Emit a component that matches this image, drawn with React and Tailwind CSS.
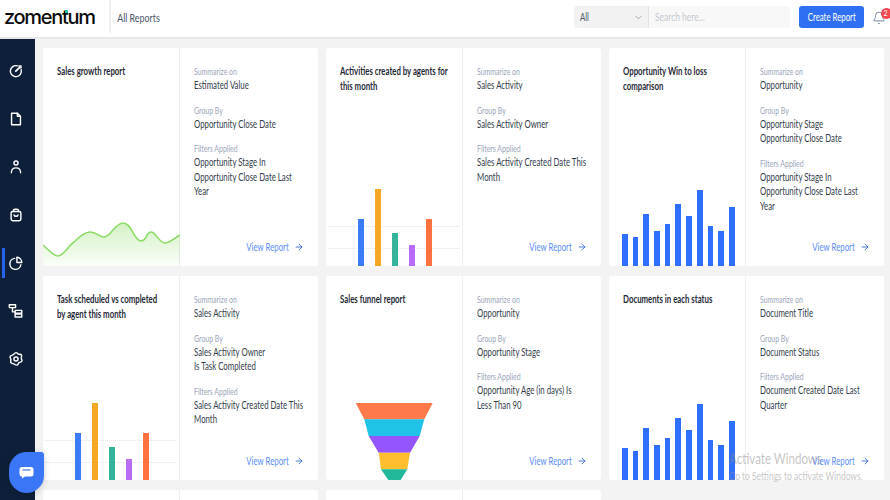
import React from 'react';
import { ChevronDown, Bell, ArrowRight } from 'lucide-react';

// the reference's text is squeezed horizontally, no installed face is that narrow
const squeeze = 'origin-left scale-x-[0.71] whitespace-nowrap';
const squeezeWide = 'origin-left scale-x-[0.77] whitespace-nowrap';

const Icon = ({ children, active }) => (
  <div className="relative h-[48px] flex items-center justify-center pr-[3px]">
    {active && <div className="absolute left-[2px] top-[9px] w-[3px] h-[30px] bg-[#2563eb]" />}
    <svg width="16" height="16" viewBox="0 0 18 18" fill="none" stroke="white" strokeWidth="1.6" strokeLinecap="round" strokeLinejoin="round">
      {children}
    </svg>
  </div>
);

const Sidebar = () => (
  <aside className="w-[35px] shrink-0 bg-[#0e2039] pt-[8px]">
    <Icon>
      <path d="M10.5 3.2A6.2 6.2 0 1 0 14.8 7.5" />
      <path d="M8.8 9.2 13.2 4.8" strokeWidth="2" />
      <path d="M12.3 3.4 14.6 3.4 14.6 5.7" />
    </Icon>
    <Icon>
      <path d="M4 2.5H10.5L14 6V15.5H4Z" />
      <path d="M10.5 2.5V6H14" />
    </Icon>
    <Icon>
      <circle cx="9" cy="4.5" r="2.3" />
      <path d="M3.8 15.5C3.8 12 6 10 9 10C12 10 14.2 12 14.2 15.5" />
    </Icon>
    <Icon>
      <rect x="3.5" y="5" width="11" height="10.5" rx="2" />
      <path d="M6 5V4.5A2 2 0 0 1 8 2.5H10A2 2 0 0 1 12 4.5V5" />
      <path d="M6.8 9C7.2 11 10.8 11 11.2 9" />
    </Icon>
    <Icon active>
      <path d="M7.5 3.8A6.2 6.2 0 1 0 14.4 11" />
      <path d="M10 2.5A6 6 0 0 1 15.5 8.5H10Z" />
    </Icon>
    <Icon>
      <rect x="1.5" y="2" width="7" height="3.2" />
      <rect x="8" y="8.3" width="7.5" height="3.2" />
      <rect x="8" y="12.5" width="7.5" height="3.2" />
      <path d="M5 5.2V10H8" />
    </Icon>
    <Icon>
      <path d="M9 1.8C10.3 1.8 11 3.3 12 3.6C13.2 3.9 14.6 3.3 15.2 4.6C15.8 5.9 14.7 6.9 14.9 8.2C15 9.3 16.2 10.3 15.6 11.5C15 12.7 13.5 12.3 12.5 13.1C11.5 13.9 11.2 15.6 9.9 15.9C8.6 16.2 7.8 15 6.6 14.5C5.5 14 3.9 14.3 3.2 13.1C2.5 11.9 3.4 10.8 3.2 9.5C3 8.2 1.8 7.2 2.5 6C3.2 4.8 4.8 5 5.8 4.2C6.8 3.4 7.7 1.8 9 1.8Z" />
      <circle cx="9" cy="9" r="2.3" />
    </Icon>
  </aside>
);

const Header = () => (
  <header className="h-[39px] shrink-0 flex items-start bg-white border-b-2 border-[#e8e8e8]">
    <div className="relative w-[111px] h-[33px] border-r-2 border-[#f0f0f0] pl-[4px] pt-[3px]">
      <span className="text-[20px] leading-[28px] font-medium tracking-[-1.3px] text-[#0b0b0b]" style={{ fontFamily: 'Inter, sans-serif' }}>zomentum</span>
      <span className="absolute left-[65px] top-[10px] w-[3px] h-[3px] bg-[#1fc7a8]" />
    </div>
    <div className={`pl-[8px] pt-[11px] text-[11.5px] leading-[14px] text-[#4a5568] ${squeezeWide}`}>All Reports</div>
    <div className="ml-auto flex items-start pt-[6px]">
      <div className="w-[75px] h-[22px] flex items-center justify-between bg-[#f2f2f2] border-r border-[#e2e2e2] rounded-l-[3px] pl-[6px] pr-[4px] text-[11px] text-[#4a5568]">
        <span className={squeeze}>All</span>
        <ChevronDown size={11} className="text-[#9aa3af]" />
      </div>
      <div className="w-[141px] h-[22px] flex items-center bg-[#f8f8f8] rounded-r-[3px] pl-[6px] text-[11px] text-[#c4c8ce]">
        <span className={squeezeWide}>Search here...</span>
      </div>
      <div className="ml-[9px] w-[65px] h-[22px] flex items-center justify-center bg-[#2f6ff3] rounded-[3px] text-[11px] text-white">
        <span className="scale-x-[0.71] whitespace-nowrap">Create Report</span>
      </div>
      <div className="relative w-[26px] h-[22px]">
        <Bell size={14} strokeWidth={1.4} className="absolute left-[8px] top-[5px] text-[#5b6f8c]" />
        <span className="absolute left-[17px] top-[2px] w-[11px] h-[11px] rounded-full bg-[#f1484f] text-white text-[7px] leading-[11px] pl-[2.5px]">2</span>
      </div>
    </div>
  </header>
);

const agentBars = [
  { h: 47, c: '#3b7bf6' },
  { h: 77, c: '#f7a823' },
  { h: 33, c: '#36b39b' },
  { h: 21, c: '#b96cf5' },
  { h: 47, c: '#ff7240' },
];

const blueBars = [32, 29, 52, 35, 42, 62, 50, 76, 40, 35, 59];

const AgentChart = () => (
  <div className="relative h-[77px] flex items-end gap-[11px] pl-[32px]">
    <div className="absolute left-[2px] right-[3px] top-[37px] border-t border-dotted border-[#e4e4e4]" />
    <div className="absolute left-[2px] right-[3px] top-[59px] border-t border-dotted border-[#e4e4e4]" />
    {agentBars.map((b, i) => (
      <div key={i} className="relative w-[6px]" style={{ height: b.h, backgroundColor: b.c }} />
    ))}
  </div>
);

const BlueChart = () => (
  <div className="h-[77px] flex items-end pl-[13px] gap-[5px]">
    {blueBars.map((h, i) => (
      <div key={i} className="w-[5.7px] bg-[#2f6fff]" style={{ height: h }} />
    ))}
  </div>
);

const AreaChart = () => (
  <svg width="137" height="46" viewBox="0 0 137 46" className="block">
    <defs>
      <linearGradient id="area" x1="0" y1="0" x2="0" y2="1">
        <stop offset="0" stopColor="#8ddc66" stopOpacity="0.38" />
        <stop offset="1" stopColor="#8ddc66" stopOpacity="0.04" />
      </linearGradient>
    </defs>
    <path d="M0 25C6 30 10 36 15 36C21 36 24 27 31 22C37 16 42 12 47 12C54 12 56 17 61 17C68 17 72 3 80 3C89 3 91 21 98 21C104 21 103 12 108 12C113 12 116 23 122 23C127 23 131 18 137 15V46H0Z" fill="url(#area)" />
    <path d="M0 25C6 30 10 36 15 36C21 36 24 27 31 22C37 16 42 12 47 12C54 12 56 17 61 17C68 17 72 3 80 3C89 3 91 21 98 21C104 21 103 12 108 12C113 12 116 23 122 23C127 23 131 18 137 15" fill="none" stroke="#8ddc66" strokeWidth="1.6" />
  </svg>
);

const FunnelChart = () => (
  <svg width="137" height="77" viewBox="0 0 137 77" className="block">
    <polygon points="29.7,0 106.7,0 98.3,16.3 38.3,16.3" fill="#ff7a4a" />
    <polygon points="38.3,16.3 98.3,16.3 93.7,33 42.7,33" fill="#1fc3e8" />
    <polygon points="42.7,33 93.7,33 84,49.7 52.7,49.7" fill="#9455ff" />
    <polygon points="52.7,49.7 84,49.7 81.3,66.3 55,66.3" fill="#ffbe2e" />
    <polygon points="55,66.3 81.3,66.3 74.7,77 62.3,77" fill="#22b89a" />
  </svg>
);

const Section = ({ label, lines }) => (
  <div className="mb-[12px]">
    <div className={`text-[9px] leading-[12px] text-[#9aa5b8] ${squeezeWide}`}>{label}</div>
    {lines.map((l, i) => (
      <div key={i} className={`text-[11px] leading-[14.5px] text-[#333d4b] ${squeeze}`}>{l}</div>
    ))}
  </div>
);

const Card = ({ title, chart, summarize, group, filters }) => (
  <div className="flex h-full bg-white rounded-[3px] overflow-hidden">
    <div className="w-[137px] shrink-0 flex flex-col justify-between border-r border-[#eeeeee]">
      <div className="pl-[14px] pt-[16px] text-[11px] leading-[14.5px] font-bold text-[#1f2937]">
        {title.map((t, i) => (
          <div key={i} className={squeeze}>{t}</div>
        ))}
      </div>
      {chart}
    </div>
    <div className="flex-1 min-w-0 flex flex-col pl-[14px] pr-[10px] pt-[18px]">
      <Section label="Summarize on" lines={[summarize]} />
      <Section label="Group By" lines={group} />
      <Section label="Filters Applied" lines={filters} />
      <div className="mt-auto mb-[12px] flex justify-end items-center gap-[5px] pr-[4px] text-[11px] leading-[14px] text-[#5b8cf5]">
        <span className="origin-right scale-x-[0.71] whitespace-nowrap">View Report</span>
        <ArrowRight size={10} strokeWidth={2} className="text-[#2f5fd0]" />
      </div>
    </div>
  </div>
);

const App = () => (
  <div className="relative w-[890px] h-[500px] flex flex-col overflow-hidden bg-[#f3f3f3]" style={{ fontFamily: 'Lato, sans-serif' }}>
    <Header />
    <div className="flex-1 min-h-0 flex">
      <Sidebar />
      <main className="flex-1 min-w-0 overflow-hidden pl-[8px] pt-[9px]">
        <div className="grid grid-cols-[275px_275px_275px] grid-rows-[218px_204px_218px] gap-x-[8px] gap-y-[10px]">
          <Card
            title={['Sales growth report']}
            chart={<AreaChart />}
            summarize="Estimated Value"
            group={['Opportunity Close Date']}
            filters={['Opportunity Stage In', 'Opportunity Close Date Last', 'Year']}
          />
          <Card
            title={['Activities created by agents for', 'this month']}
            chart={<AgentChart />}
            summarize="Sales Activity"
            group={['Sales Activity Owner']}
            filters={['Sales Activity Created Date This', 'Month']}
          />
          <Card
            title={['Opportunity Win to loss', 'comparison']}
            chart={<BlueChart />}
            summarize="Opportunity"
            group={['Opportunity Stage', 'Opportunity Close Date']}
            filters={['Opportunity Stage In', 'Opportunity Close Date Last', 'Year']}
          />
          <Card
            title={['Task scheduled vs completed', 'by agent this month']}
            chart={<AgentChart />}
            summarize="Sales Activity"
            group={['Sales Activity Owner', 'Is Task Completed']}
            filters={['Sales Activity Created Date This', 'Month']}
          />
          <Card
            title={['Sales funnel report']}
            chart={<FunnelChart />}
            summarize="Opportunity"
            group={['Opportunity Stage']}
            filters={['Opportunity Age (in days) Is', 'Less Than 90']}
          />
          <Card
            title={['Documents in each status']}
            chart={<BlueChart />}
            summarize="Document Title"
            group={['Document Status']}
            filters={['Document Created Date Last', 'Quarter']}
          />
          <div className="bg-white rounded-[3px] flex"><div className="w-[137px] border-r border-[#eeeeee]" /></div>
          <div className="bg-white rounded-[3px] flex"><div className="w-[137px] border-r border-[#eeeeee]" /></div>
        </div>
      </main>
    </div>

    {/* chat bubble */}
    <div className="absolute left-[9px] top-[452px] w-[35px] h-[41px] flex items-center justify-center bg-[#3b76f6] rounded-[18px_3px_18px_18px] shadow-[0_1px_6px_rgba(0,0,0,0.2)]">
      <svg width="15" height="13" viewBox="0 0 15 13">
        <path d="M3 1H12A2.5 2.5 0 0 1 14.5 3.5V8A2.5 2.5 0 0 1 12 10.5H6L3 12.5V10.5A2.5 2.5 0 0 1 .5 8V3.5A2.5 2.5 0 0 1 3 1Z" fill="white" />
        <path d="M3.5 4H11.5" stroke="#3b76f6" strokeWidth="1.2" />
      </svg>
    </div>

    {/* windows watermark */}
    <div className="absolute left-[729px] top-[447px] pointer-events-none text-[#8a8a8a]/50">
      <div className={`text-[15px] leading-[22px] ${squeezeWide}`}>Activate Windows</div>
      <div className={`text-[11px] leading-[14px] ${squeezeWide}`}>Go to Settings to activate Windows.</div>
    </div>
  </div>
);

export default App;
